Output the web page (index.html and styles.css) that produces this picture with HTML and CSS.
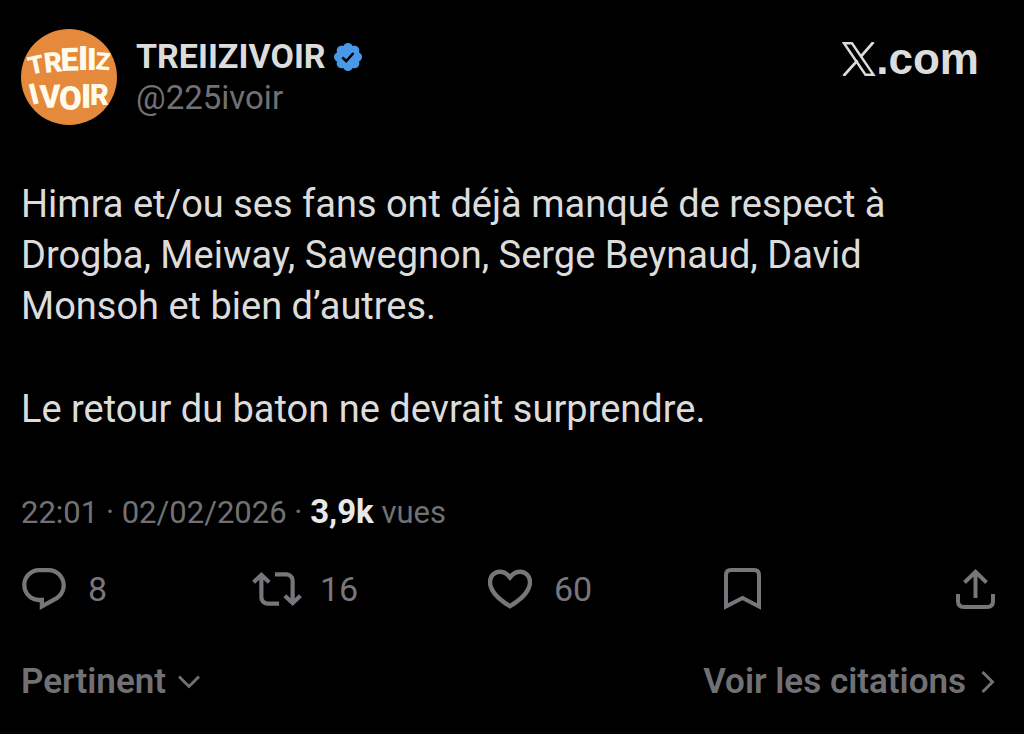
FILE: index.html
```
<!DOCTYPE html>
<html lang="fr">
<head>
<meta charset="utf-8">
<meta name="viewport" content="width=device-width, initial-scale=1">
<title>TREIIZIVOIR sur X</title>
<link rel="stylesheet" href="styles.css">
</head>
<body>
<article class="post">
  <header class="post-header">
    <svg class="avatar" viewBox="0 0 96 96" role="img" aria-label="TREIIZ IVOIR">
      <circle cx="48" cy="48" r="48" fill="#e58a3c"/>
      <g class="avatar-letters">
        <text x="9" y="46" font-size="25" transform="rotate(-12 9 46)">T</text>
        <text x="24" y="44" font-size="28" transform="rotate(-6 24 44)">R</text>
        <text x="40" y="42" font-size="32" transform="rotate(-2 40 42)">E</text>
        <text x="57" y="41" font-size="34">I</text>
        <text x="66" y="41" font-size="32">I</text>
        <text x="74" y="40" font-size="24" transform="rotate(5 74 40)">Z</text>
        <text x="11" y="76" font-size="29" transform="rotate(-14 11 76)">I</text>
        <text x="19" y="79" font-size="32" transform="rotate(-2 19 79)">V</text>
        <text x="38" y="81" font-size="33">O</text>
        <text x="60" y="79" font-size="34">I</text>
        <text x="69" y="76" font-size="29">R</text>
      </g>
    </svg>
    <div class="author">
      <div class="author-name">
        <strong>TREIIZIVOIR</strong>
        <svg class="badge" viewBox="1.6 1.6 18.8 18.8" role="img" aria-label="Compte certifié">
          <path fill="#4a99e9" d="M20.396 11c-.018-.646-.215-1.275-.57-1.816-.354-.54-.852-.972-1.438-1.246.223-.607.27-1.264.14-1.897-.131-.634-.437-1.218-.882-1.687-.47-.445-1.053-.75-1.687-.882-.633-.13-1.29-.083-1.897.14-.273-.587-.704-1.086-1.245-1.44S11.647 1.62 11 1.604c-.646.017-1.273.213-1.813.568s-.969.854-1.24 1.44c-.608-.223-1.267-.272-1.902-.14-.635.13-1.22.436-1.69.882-.445.47-.749 1.055-.878 1.688-.13.633-.08 1.29.144 1.896-.587.274-1.087.705-1.443 1.245-.356.54-.555 1.17-.574 1.817.02.647.218 1.276.574 1.817.356.54.856.972 1.443 1.245-.224.606-.274 1.263-.144 1.896.13.634.433 1.218.877 1.688.47.443 1.054.747 1.687.878.633.132 1.29.084 1.897-.136.274.586.705 1.084 1.246 1.439.54.354 1.17.551 1.816.569.647-.016 1.276-.213 1.817-.567s.972-.854 1.245-1.44c.604.239 1.266.296 1.903.164.636-.132 1.22-.447 1.68-.907.46-.46.776-1.044.908-1.681s.075-1.299-.165-1.903c.586-.274 1.084-.705 1.439-1.246.354-.54.551-1.17.569-1.816z"/>
          <path fill="none" stroke="#000" stroke-width="1.7" d="M7.2 11.2l2.6 2.6 4.9-5.5"/>
        </svg>
      </div>
      <div class="author-handle">@225ivoir</div>
    </div>
    <a class="brand" href="#" aria-label="X.com">
      <svg class="brand-x" viewBox="0 0 34 34" aria-hidden="true">
        <path fill="none" stroke="currentColor" stroke-width="2.4" d="M2 1.200H10L31.500 32.800H23.500z"/>
        <path fill="none" stroke="currentColor" stroke-width="2.800" d="M31.500 0L18.800 14.600M15.500 18.400L1.500 34"/>
      </svg>
      <span>.com</span>
    </a>
  </header>

  <div class="post-text">
    <p>Himra et/ou ses fans ont déjà manqué de respect à Drogba, Meiway, Sawegnon, Serge Beynaud, David Monsoh et bien d’autres.</p>
    <p>Le retour du baton ne devrait surprendre.</p>
  </div>

  <div class="post-meta"><time datetime="2026-02-02T22:01">22:01 · 02/02/2026</time> · <strong>3,9k</strong> vues</div>

  <div class="actions">
    <button type="button" class="action" aria-label="Répondre, 8">
      <svg width="44" height="42" viewBox="1.75 2 20.5 19.7"><path fill="currentColor" d="M1.751 10c0-4.42 3.584-8 8.005-8h4.366c4.49 0 8.129 3.64 8.129 8.13 0 2.96-1.607 5.68-4.196 7.11l-8.054 4.46v-3.69h-.067c-4.49.1-8.183-3.51-8.183-8.01zm8.005-6c-3.317 0-6.005 2.69-6.005 6 0 3.37 2.77 6.08 6.138 6.01l.351-.01h1.761v2.3l5.087-2.81c1.951-1.08 3.163-3.13 3.163-5.36 0-3.39-2.744-6.13-6.129-6.13H9.756z"/></svg>
      <span>8</span>
    </button>
    <button type="button" class="action repost" aria-label="Reposter, 16">
      <svg width="50" height="34" viewBox="0 3.88 24 16.24"><path fill="currentColor" d="M4.5 3.88l4.432 4.14-1.364 1.46L5.5 7.55V16c0 1.1.896 2 2 2H13v2H7.5c-2.209 0-4-1.79-4-4V7.55L1.432 9.48.068 8.02 4.5 3.88zM16.5 6H11V4h5.5c2.209 0 4 1.79 4 4v8.45l2.068-1.93 1.364 1.46-4.432 4.14-4.432-4.14 1.364-1.46 2.068 1.93V8c0-1.1-.896-2-2-2z"/></svg>
      <span>16</span>
    </button>
    <button type="button" class="action" aria-label="J’aime, 60">
      <svg width="44" height="40" viewBox="2.1 3.300 19.8 18"><path fill="currentColor" d="M16.697 5.5c-1.222-.06-2.679.51-3.89 2.16l-.805 1.09-.806-1.09C9.984 6.01 8.526 5.44 7.304 5.5c-1.243.07-2.349.78-2.91 1.91-.552 1.12-.633 2.78.479 4.82 1.074 1.97 3.257 4.27 7.129 6.61 3.87-2.34 6.052-4.64 7.126-6.61 1.111-2.04 1.03-3.7.477-4.82-.561-1.13-1.666-1.84-2.908-1.91zm4.187 7.69c-1.351 2.48-4.001 5.12-8.379 7.67l-.503.3-.504-.3c-4.379-2.55-7.029-5.19-8.382-7.67-1.36-2.5-1.41-4.86-.514-6.67.887-1.79 2.647-2.91 4.601-3.01 1.651-.09 3.368.56 4.798 2.01 1.429-1.45 3.146-2.1 4.796-2.01 1.954.1 3.714 1.22 4.601 3.01.896 1.81.846 4.17-.514 6.67z"/></svg>
      <span>60</span>
    </button>
    <button type="button" class="action" aria-label="Enregistrer">
      <svg width="37" height="42" viewBox="0 0 37 42"><path fill="none" stroke="currentColor" stroke-width="4" d="M2 38.500V7Q2 2 7 2H30Q35 2 35 7V38.500L18.500 30z"/></svg>
    </button>
    <button type="button" class="action" aria-label="Partager">
      <svg width="39" height="40" viewBox="0 0 39 40"><path fill="none" stroke="currentColor" stroke-width="4" d="M19.500 29V3M8.500 13.500L19.500 2.800 30.500 13.500M2 25V32Q2 38 8 38H31Q37 38 37 32V25"/></svg>
    </button>
  </div>

  <footer class="post-footer">
    <button type="button" class="footer-link sort">
      <span>Pertinent</span>
      <svg width="22" height="14" viewBox="0 0 22 14"><path fill="none" stroke="currentColor" stroke-width="3" d="M1 1.500L11 11.500 21 1.500"/></svg>
    </button>
    <a class="footer-link quotes" href="#">
      <span>Voir les citations</span>
      <svg width="14" height="22" viewBox="0 0 14 22"><path fill="none" stroke="currentColor" stroke-width="3" d="M1.500 1L11.500 11 1.500 21"/></svg>
    </a>
  </footer>
</article>
</body>
</html>
```
FILE: styles.css
```
* {
  box-sizing: border-box;
}

body {
  margin: 0;
  background: #000;
  color: #dcdcdc;
  font-family: Roboto, "Liberation Sans", sans-serif;
}

svg {
  display: block;
  flex: none;
}

button {
  margin: 0;
  padding: 0;
  border: 0;
  background: none;
  color: inherit;
  font: inherit;
  cursor: pointer;
}

a {
  color: inherit;
  text-decoration: none;
}

.post {
  padding: 29px 29px 20px 21px;
}

.post-header {
  display: flex;
  align-items: flex-start;
  gap: 19px;
}

.avatar {
  width: 96px;
  height: 96px;
}

.avatar-letters {
  fill: #fffbea;
  font-family: Roboto, sans-serif;
  font-weight: 900;
}

.author {
  flex: 1;
  padding-top: 7px;
  line-height: 41px;
}

.author-name {
  display: flex;
  align-items: center;
  gap: 8px;
  font-size: 34px;
}

.badge {
  width: 28px;
  height: 28px;
}

.author-handle {
  color: #717175;
  font-size: 33px;
}

.brand {
  display: flex;
  align-items: center;
  margin: 5px 16px 0 0;
  font: 700 44px/50px "Liberation Sans", sans-serif;
}

.brand-x {
  width: 34px;
  height: 34px;
}

.post-text {
  max-width: 900px;
  margin-top: 54px;
  font-size: 38px;
  line-height: 51px;
}

.post-text p {
  margin: 0 0 52px;
}

.post-meta {
  margin-top: 57px;
  color: #717175;
  font-size: 31px;
  line-height: 40px;
}

.post-meta strong {
  color: #e8e8e8;
  font-size: 33px;
}

.actions {
  display: grid;
  grid-template-columns: 230fr 236fr 236fr 232fr auto;
  align-items: center;
  margin-top: 34px;
  padding-left: 1px;
  color: #77777b;
}

.action {
  display: flex;
  align-items: center;
  gap: 22px;
  font-size: 34px;
  line-height: 44px;
}

.repost {
  gap: 18px;
}

.post-footer {
  display: flex;
  justify-content: space-between;
  margin-top: 50px;
  color: #717175;
}

.footer-link {
  display: flex;
  align-items: center;
  gap: 12px;
  font-size: 35px;
  font-weight: 600;
  line-height: 42px;
}

.quotes {
  gap: 15px;
}
```
